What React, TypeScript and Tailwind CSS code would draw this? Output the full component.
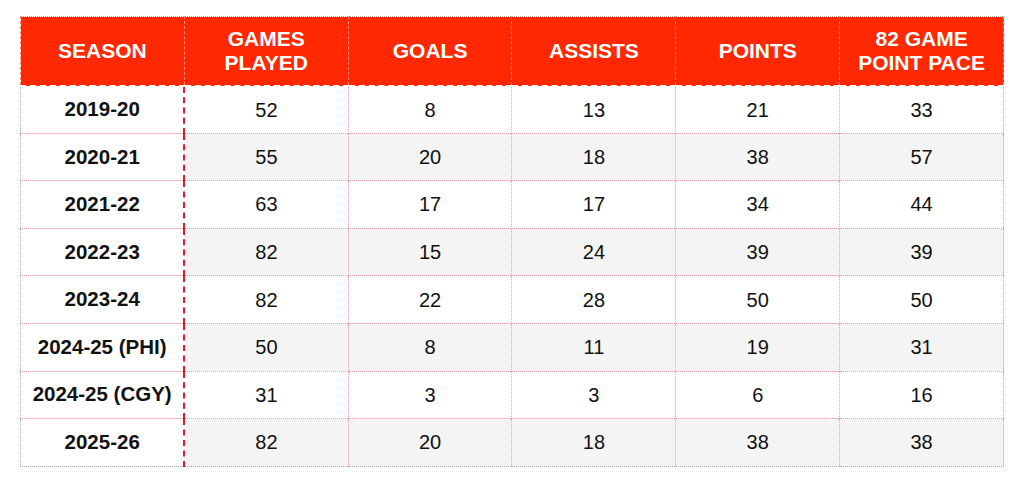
const headers = [["SEASON"], ["GAMES", "PLAYED"], ["GOALS"], ["ASSISTS"], ["POINTS"], ["82 GAME", "POINT PACE"]];

const rows = [
  ["2019-20", "52", "8", "13", "21", "33"],
  ["2020-21", "55", "20", "18", "38", "57"],
  ["2021-22", "63", "17", "17", "34", "44"],
  ["2022-23", "82", "15", "24", "39", "39"],
  ["2023-24", "82", "22", "28", "50", "50"],
  ["2024-25 (PHI)", "50", "8", "11", "19", "31"],
  ["2024-25 (CGY)", "31", "3", "3", "6", "16"],
  ["2025-26", "82", "20", "18", "38", "38"],
];

export default function App() {
  return (
    <div className="w-[1024px] h-[488px] bg-white pt-4 pl-5" style={{ fontFamily: "'Liberation Sans', Arial, sans-serif" }}>
      <table className="w-[984px] border-collapse table-fixed border border-dotted border-[#a8a8a8]">
        <thead>
          <tr className="h-[69px] bg-[#ff2800]">
            {headers.map((h, i) => (
              <th
                key={i}
                className="border-b-2 border-dashed border-b-white border-x border-x-[#ff8c7a] text-white font-bold text-[21px] leading-[24px] text-center"
              >
                {h.map((line) => (
                  <div key={line}>{line}</div>
                ))}
              </th>
            ))}
          </tr>
        </thead>
        <tbody>
          {rows.map((r, ri) => (
            <tr key={ri} className="h-[47.6px]">
              {r.map((c, ci) => (
                <td
                  key={ci}
                  className={
                    ci === 0
                      ? "bg-white font-bold text-[20.5px] text-[#111] text-center border-t border-dotted border-t-[#f19cad] border-r-2 border-r-[#e8162c]"
                      : `${ri % 2 === 1 ? "bg-[#f4f4f4]" : "bg-white"} text-[20px] text-[#111] text-center border-t border-l border-dotted border-[#f19cad]`
                  }
                  style={ci === 0 ? { borderRightStyle: "dashed" } : undefined}
                >
                  {c}
                </td>
              ))}
            </tr>
          ))}
        </tbody>
      </table>
    </div>
  );
}
